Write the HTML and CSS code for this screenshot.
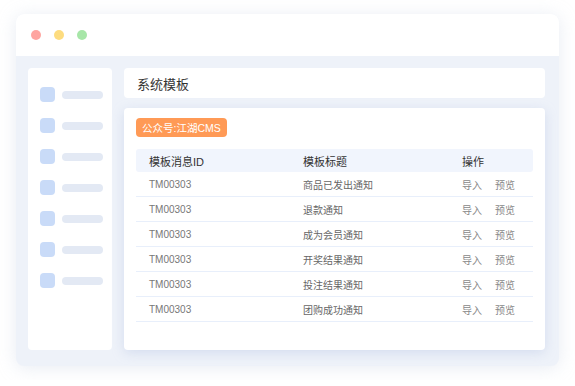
FILE: index.html
```html
<!DOCTYPE html>
<html lang="zh-CN">
<head>
    <meta charset="UTF-8">
    <meta name="viewport" content="width=device-width, initial-scale=1.0">
    <title>系统模板</title>
    <link rel="stylesheet" href="styles.css">
</head>
<body>
    <div class="window">
        <div class="titlebar">
            <span class="dot red"></span>
            <span class="dot yellow"></span>
            <span class="dot green"></span>
        </div>
        <div class="win-body">
            <div class="sidebar">
                <div class="side-item"><span class="side-icon"></span><span class="side-bar"></span></div>
                <div class="side-item"><span class="side-icon"></span><span class="side-bar"></span></div>
                <div class="side-item"><span class="side-icon"></span><span class="side-bar"></span></div>
                <div class="side-item"><span class="side-icon"></span><span class="side-bar"></span></div>
                <div class="side-item"><span class="side-icon"></span><span class="side-bar"></span></div>
                <div class="side-item"><span class="side-icon"></span><span class="side-bar"></span></div>
                <div class="side-item"><span class="side-icon"></span><span class="side-bar"></span></div>
            </div>
            <div class="content">
                <div class="page-title">系统模板</div>
                <div class="card">
                    <span class="badge">公众号:江湖CMS</span>
                    <div class="table">
                        <div class="row head">
                            <span>模板消息ID</span>
                            <span>模板标题</span>
                            <span>操作</span>
                        </div>
                        <div class="row">
                            <span class="id">TM00303</span>
                            <span>商品已发出通知</span>
                            <span class="ops"><span>导入</span><span>预览</span></span>
                        </div>
                        <div class="row">
                            <span class="id">TM00303</span>
                            <span>退款通知</span>
                            <span class="ops"><span>导入</span><span>预览</span></span>
                        </div>
                        <div class="row">
                            <span class="id">TM00303</span>
                            <span>成为会员通知</span>
                            <span class="ops"><span>导入</span><span>预览</span></span>
                        </div>
                        <div class="row">
                            <span class="id">TM00303</span>
                            <span>开奖结果通知</span>
                            <span class="ops"><span>导入</span><span>预览</span></span>
                        </div>
                        <div class="row">
                            <span class="id">TM00303</span>
                            <span>投注结果通知</span>
                            <span class="ops"><span>导入</span><span>预览</span></span>
                        </div>
                        <div class="row">
                            <span class="id">TM00303</span>
                            <span>团购成功通知</span>
                            <span class="ops"><span>导入</span><span>预览</span></span>
                        </div>
                    </div>
                </div>
            </div>
        </div>
    </div>
</body>
</html>
```

FILE: styles.css
```css
body {
    margin: 0;
    background-color: #fff;
    font-family: "Liberation Sans", "Noto Sans CJK SC", sans-serif;
    color: #333;
}
.window {
    margin: 14px 16px;
    width: 543px;
    height: 352px;
    border-radius: 8px;
    background-color: #eef2f9;
    box-shadow: 0 2px 18px rgba(190, 200, 220, 0.35);
    overflow: hidden;
    display: flex;
    flex-direction: column;
}
.titlebar {
    height: 42px;
    background-color: #fff;
    display: flex;
    align-items: center;
    gap: 13px;
    padding-left: 15px;
    flex-shrink: 0;
}
.dot {
    width: 10px;
    height: 10px;
    border-radius: 50%;
}
.red { background-color: #fea5a0; }
.yellow { background-color: #fddc7f; }
.green { background-color: #a7e6a8; }
.win-body {
    flex: 1;
    display: flex;
    gap: 12px;
    padding: 12px 14px 16px 12px;
}
.sidebar {
    width: 84px;
    background-color: #fff;
    border-radius: 4px;
    padding: 19px 0 0 12px;
    box-sizing: border-box;
    display: flex;
    flex-direction: column;
    gap: 16px;
}
.side-item {
    display: flex;
    align-items: center;
    gap: 7px;
}
.side-icon {
    width: 15px;
    height: 15px;
    border-radius: 4px;
    background-color: #c9dbf8;
}
.side-bar {
    width: 41px;
    height: 8px;
    border-radius: 4px;
    background-color: #e3e9f4;
}
.content {
    flex: 1;
    display: flex;
    flex-direction: column;
    gap: 10px;
}
.page-title {
    height: 30px;
    background-color: #fff;
    border-radius: 4px;
    padding-left: 13px;
    display: flex;
    align-items: center;
    font-size: 13px;
    color: #333;
}
.card {
    flex: 1;
    background-color: #fff;
    border-radius: 4px;
    padding: 10px 12px;
    box-shadow: 0 3px 12px rgba(175, 190, 225, 0.4);
}
.badge {
    display: inline-flex;
    align-items: center;
    height: 19px;
    padding: 0 6px;
    background-color: #ff9a56;
    color: #fff;
    font-size: 10.5px;
    border-radius: 4px;
}
.table {
    margin-top: 12px;
}
.row {
    display: grid;
    grid-template-columns: 154px 159px 1fr;
    padding: 1px 0 0 13px;
    height: 24px;
    box-sizing: border-box;
    height: 25px;
    align-items: center;
    border-bottom: 1px solid #e8effb;
    font-size: 10px;
    color: #666;
}
.row.head {
    height: 23px;
    padding-top: 0;
    border-bottom: none;
    background-color: #f1f5fd;
    border-radius: 3px;
    font-size: 11px;
    color: #333;
}
.id {
    color: #777;
}
.ops {
    display: flex;
    gap: 13px;
    color: #888;
}
```
